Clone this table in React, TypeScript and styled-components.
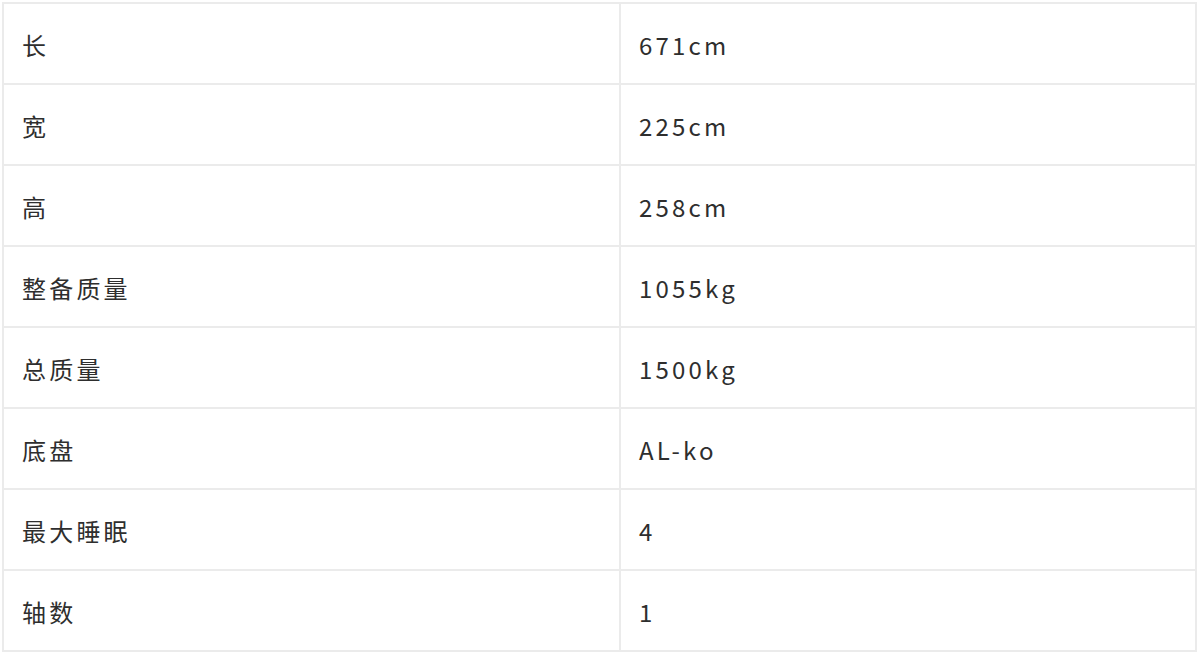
import React from 'react';
import styled, { createGlobalStyle } from 'styled-components';

interface Spec {
  name: string;
  value: string;
}

const specs: Spec[] = [
  { name: '长', value: '671cm' },
  { name: '宽', value: '225cm' },
  { name: '高', value: '258cm' },
  { name: '整备质量', value: '1055kg' },
  { name: '总质量', value: '1500kg' },
  { name: '底盘', value: 'AL-ko' },
  { name: '最大睡眠', value: '4' },
  { name: '轴数', value: '1' },
];

const GlobalStyle = createGlobalStyle`
  body {
    margin: 0;
    background: #ffffff;
    font-family: "Noto Sans CJK SC", "Noto Sans", sans-serif;
  }
`;

const Page = styled.div`
  padding: 2px 3px 0 2px;
`;

const Table = styled.table`
  width: 1195px;
  border-collapse: collapse;
  table-layout: fixed;
`;

const TableRow = styled.tr`
  height: 81px;
`;

const TableCell = styled.td<{ $wide?: boolean }>`
  width: ${(p) => (p.$wide ? '597px' : 'auto')};
  padding: 2px 0 0 18px;
  border: 2px solid #ebebeb;
  color: #2e2e2e;
  font-size: 24px;
  letter-spacing: 3.2px;
  vertical-align: middle;
`;

const App: React.FC = () => {
  return (
    <>
      <GlobalStyle />
      <Page>
        <Table>
          <tbody>
            {specs.map((spec, index) => (
              <TableRow key={index}>
                <TableCell $wide>{spec.name}</TableCell>
                <TableCell>{spec.value}</TableCell>
              </TableRow>
            ))}
          </tbody>
        </Table>
      </Page>
    </>
  );
};

export default App;
